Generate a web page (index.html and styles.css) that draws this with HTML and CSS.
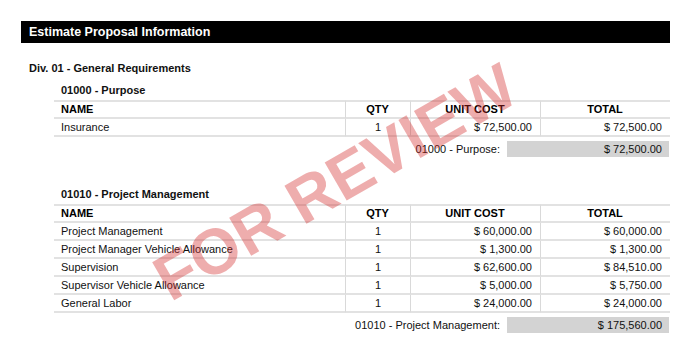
FILE: index.html
```html
<!DOCTYPE html>
<html>
<head>
<meta charset="utf-8">
<link rel="stylesheet" href="styles.css">
</head>
<body>
<div class="page">
  <div class="bar">Estimate Proposal Information</div>
  <div class="div-title">Div. 01 - General Requirements</div>

  <div class="section">
    <div class="sec-title">01000 - Purpose</div>
    <table class="items">
      <colgroup><col class="c-name"><col class="c-qty"><col class="c-unit"><col class="c-total"></colgroup>
      <thead>
        <tr><th class="l">NAME</th><th>QTY</th><th>UNIT COST</th><th>TOTAL</th></tr>
      </thead>
      <tbody>
        <tr><td class="l">Insurance</td><td class="c">1</td><td class="r">$ 72,500.00</td><td class="r">$ 72,500.00</td></tr>
      </tbody>
    </table>
    <div class="summary">
      <span class="sum-label">01000 - Purpose:</span>
      <span class="sum-box">$ 72,500.00</span>
    </div>
  </div>

  <div class="section second">
    <div class="sec-title">01010 - Project Management</div>
    <table class="items">
      <colgroup><col class="c-name"><col class="c-qty"><col class="c-unit"><col class="c-total"></colgroup>
      <thead>
        <tr><th class="l">NAME</th><th>QTY</th><th>UNIT COST</th><th>TOTAL</th></tr>
      </thead>
      <tbody>
        <tr><td class="l">Project Management</td><td class="c">1</td><td class="r">$ 60,000.00</td><td class="r">$ 60,000.00</td></tr>
        <tr><td class="l">Project Manager Vehicle Allowance</td><td class="c">1</td><td class="r">$ 1,300.00</td><td class="r">$ 1,300.00</td></tr>
        <tr><td class="l">Supervision</td><td class="c">1</td><td class="r">$ 62,600.00</td><td class="r">$ 84,510.00</td></tr>
        <tr><td class="l">Supervisor Vehicle Allowance</td><td class="c">1</td><td class="r">$ 5,000.00</td><td class="r">$ 5,750.00</td></tr>
        <tr><td class="l">General Labor</td><td class="c">1</td><td class="r">$ 24,000.00</td><td class="r">$ 24,000.00</td></tr>
      </tbody>
    </table>
    <div class="summary">
      <span class="sum-label">01010 - Project Management:</span>
      <span class="sum-box">$ 175,560.00</span>
    </div>
  </div>

  <div class="watermark">FOR REVIEW</div>
</div>
</body>
</html>
```

FILE: styles.css
```css
html, body {
  margin: 0;
  padding: 0;
  background: #fff;
}
body {
  font-family: "Liberation Sans", Arial, sans-serif;
  color: #111;
  font-size: 11px;
}
.page {
  position: relative;
  padding: 21px 30px 0 21px;
  height: 350px;
  box-sizing: border-box;
  overflow: hidden;
}
.bar {
  background: #000;
  color: #fff;
  font-weight: bold;
  font-size: 12.5px;
  height: 22px;
  line-height: 23px;
  padding-left: 8px;
}
.div-title {
  font-weight: bold;
  font-size: 11px;
  line-height: 14px;
  margin-top: 18px;
  padding-left: 8px;
}
.section {
  margin-left: 33px;
}
.sec-title {
  font-weight: bold;
  font-size: 11px;
  line-height: 14px;
  margin-top: 8px;
  margin-bottom: 3px;
  padding-left: 7px;
}
.section.second .sec-title {
  margin-top: 30px;
}
.items {
  width: 616px;
  border-collapse: separate;
  border-spacing: 0;
  table-layout: fixed;
}
.c-name { width: 291px; }
.c-qty { width: 65px; }
.c-unit { width: 130px; }
.c-total { width: 130px; }
.items th, .items td {
  padding: 0 8px 0 7px;
  border-bottom: 2px solid #e2e2e2;
  white-space: nowrap;
  overflow: hidden;
}
.items th {
  border-top: 2px solid #e2e2e2;
  font-weight: bold;
  text-align: center;
  line-height: 15px;
  color: #000;
}
.items td {
  line-height: 16px;
}
.items th + th, .items td + td {
  border-left: 1px solid #d9d9d9;
}
.items .l { text-align: left; }
.items .c { text-align: center; padding: 0; }
.items .r { text-align: right; }
.summary {
  display: flex;
  justify-content: flex-end;
  align-items: center;
  gap: 7px;
  margin-top: 4px;
  margin-right: 1px;
}
.sum-label {
  line-height: 16px;
}
.sum-box {
  width: 162px;
  height: 16px;
  line-height: 16px;
  background: #d3d3d3;
  text-align: right;
  padding-right: 7px;
  box-sizing: border-box;
}
.watermark {
  position: absolute;
  left: 335px;
  top: 182px;
  transform: translate(-50%, -50%) rotate(-30deg);
  font-family: "Liberation Sans", Arial, sans-serif;
  font-weight: bold;
  font-size: 64px;
  line-height: 1;
  white-space: nowrap;
  color: rgba(210, 40, 40, 0.38);
  pointer-events: none;
}
```
